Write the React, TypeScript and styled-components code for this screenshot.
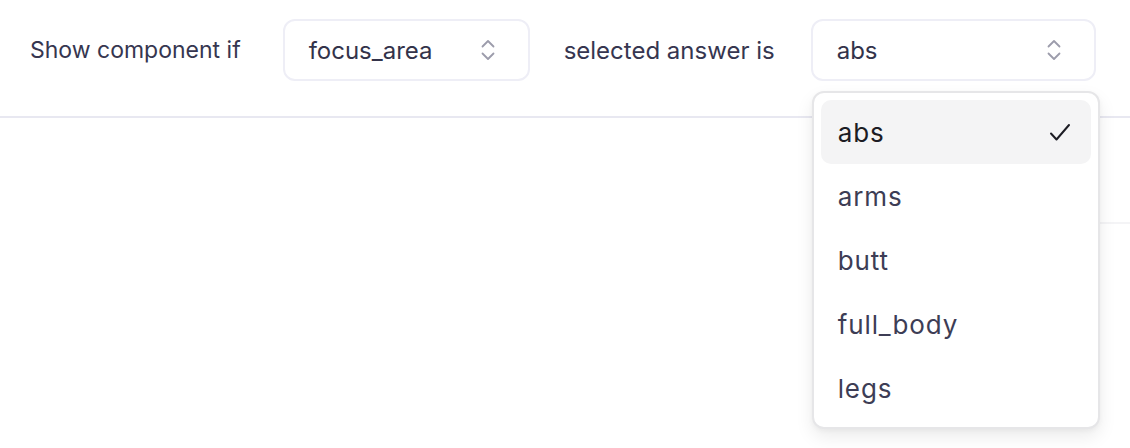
import styled, { createGlobalStyle } from 'styled-components';

const GlobalStyle = createGlobalStyle`
  html, body {
    margin: 0;
    padding: 0;
    background: #ffffff;
    font-family: Inter, "Noto Sans", sans-serif;
  }
`

const Page = styled.div`
  position: relative;
  width: 1130px;
  height: 448px;
  overflow: hidden;
  background: #ffffff;
`

const ConditionBar = styled.div`
  display: flex;
  align-items: center;
  padding: 19px 30px 35px;
  border-bottom: 2px solid #e8e8f1;
`

const Label = styled.span<{ $size: number; $gap: number }>`
  font-size: ${p => p.$size}px;
  color: #363650;
  margin-right: ${p => p.$gap}px;
  white-space: nowrap;
`

const SelectWrap = styled.div<{ $width: number; $gap?: number }>`
  position: relative;
  flex: none;
  width: ${p => p.$width}px;
  margin-right: ${p => p.$gap ?? 0}px;
`

const SelectBox = styled.div`
  box-sizing: border-box;
  height: 62px;
  display: flex;
  align-items: center;
  justify-content: space-between;
  padding: 0 32px 0 24px;
  border: 2px solid #eeeef6;
  border-radius: 12px;
  background: #ffffff;
  font-size: 24px;
  color: #33334a;
`

const Menu = styled.div`
  position: absolute;
  top: 72px;
  left: 1px;
  box-sizing: border-box;
  width: 288px;
  padding: 7px;
  background: #ffffff;
  border: 2px solid #e6e6e8;
  border-radius: 12px;
  box-shadow: 0 8px 18px rgba(0, 0, 0, 0.08), 0 2px 5px rgba(0, 0, 0, 0.04);
  z-index: 2;
`

const MenuItem = styled.div<{ $active?: boolean }>`
  height: 64px;
  display: flex;
  align-items: center;
  justify-content: space-between;
  padding: 0 20px 0 17px;
  border-radius: 10px;
  font-size: 26px;
  letter-spacing: 0.9px;
  color: ${p => (p.$active ? '#1c1c24' : '#3d3d55')};
  background: ${p => (p.$active ? '#f4f4f5' : 'transparent')};
`

const Body = styled.div`
  display: flex;
  justify-content: flex-end;
  padding-top: 104px;
`

const FaintRule = styled.div`
  width: 30px;
  height: 2px;
  background: #f4f4f6;
`

const UpDownIcon = () => (
  <svg width="16" height="22" viewBox="0 0 16 22" fill="none" stroke="#9c9cab" strokeWidth="1.8" strokeLinecap="round" strokeLinejoin="round">
    <polyline points="2.5,7.5 8,2 13.5,7.5" />
    <polyline points="2.5,14.5 8,20 13.5,14.5" />
  </svg>
)

const CheckIcon = () => (
  <svg width="22" height="19" viewBox="0 0 22 19" fill="none" stroke="#1c1c24" strokeWidth="2" strokeLinecap="round" strokeLinejoin="round">
    <polyline points="2,10.5 7.5,16.5 20,2" />
  </svg>
)

const options = ['abs', 'arms', 'butt', 'full_body', 'legs']

export default function App() {
  return (
    <Page>
      <GlobalStyle />
      <ConditionBar>
        <Label $size={23} $gap={42}>Show component if</Label>
        <SelectWrap $width={247} $gap={34}>
          <SelectBox>
            focus_area
            <UpDownIcon />
          </SelectBox>
        </SelectWrap>
        <Label $size={24} $gap={36}>selected answer is</Label>
        <SelectWrap $width={285}>
          <SelectBox>
            abs
            <UpDownIcon />
          </SelectBox>
          <Menu>
            {options.map(o => (
              <MenuItem key={o} $active={o === 'abs'}>
                {o}
                {o === 'abs' && <CheckIcon />}
              </MenuItem>
            ))}
          </Menu>
        </SelectWrap>
      </ConditionBar>
      <Body>
        <FaintRule />
      </Body>
    </Page>
  )
}
